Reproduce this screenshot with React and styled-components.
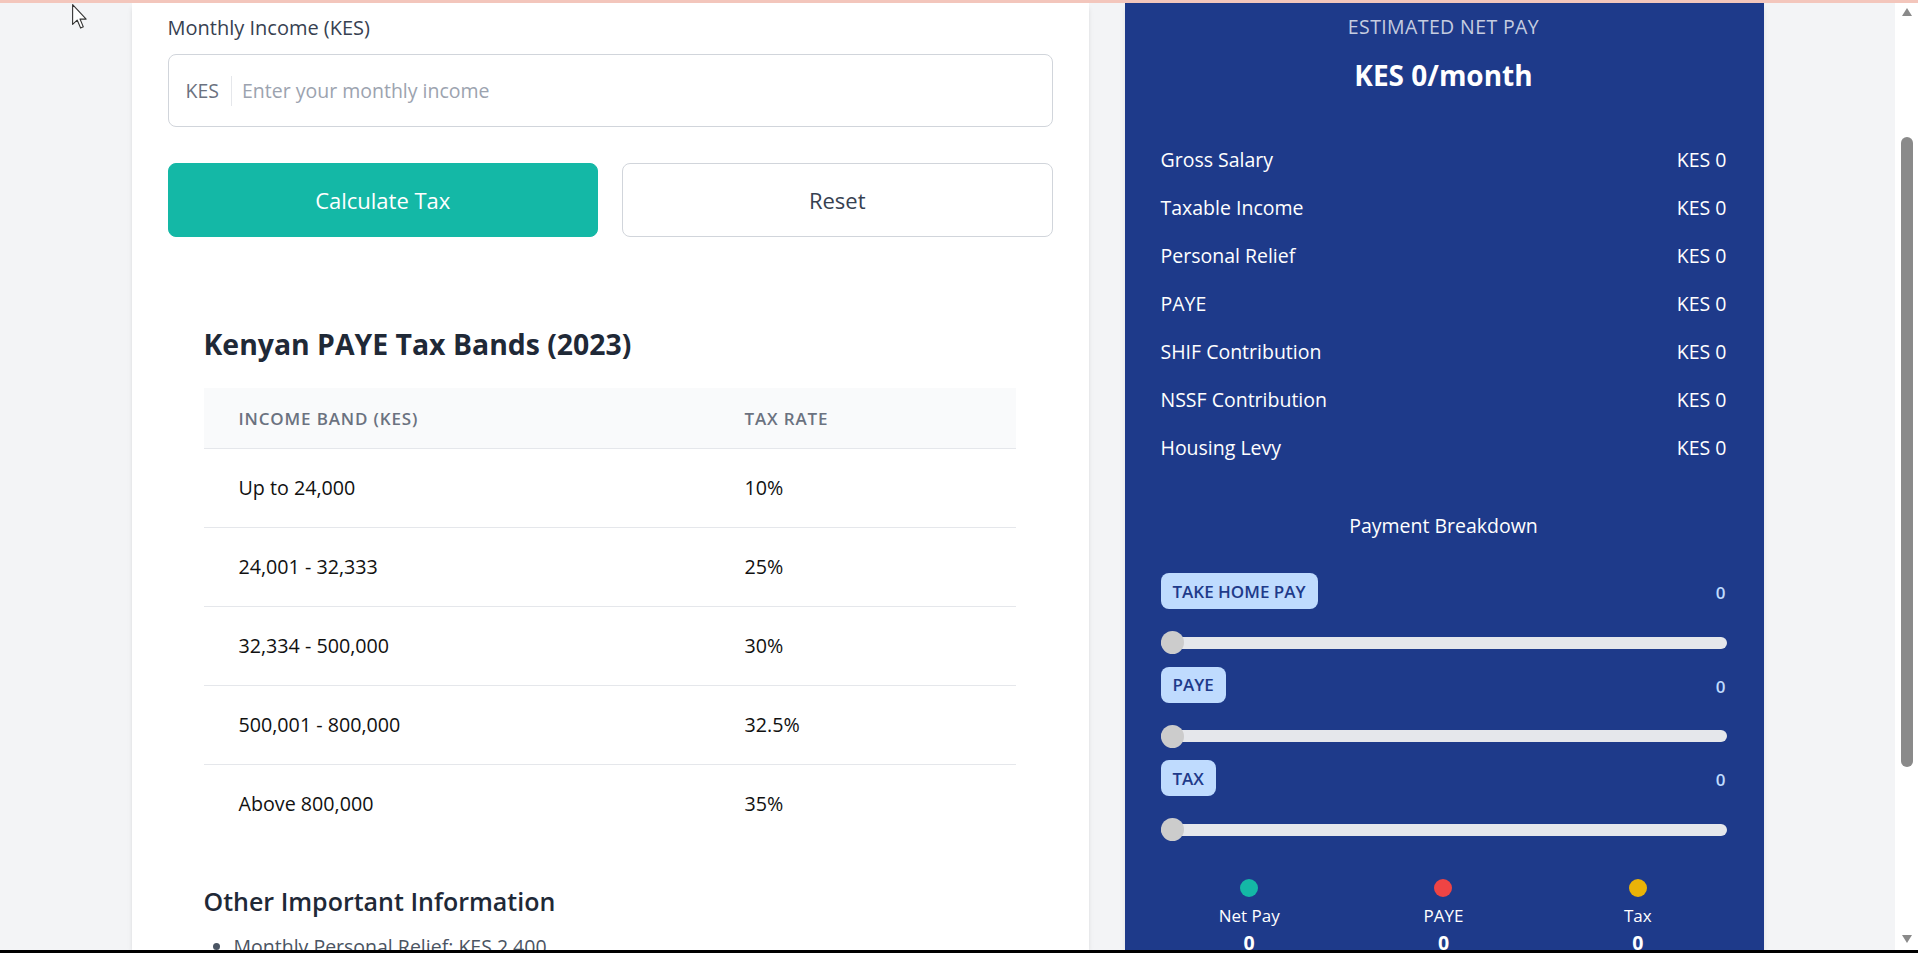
import React from "react";
import styled, { createGlobalStyle } from "styled-components";

const GlobalStyle = createGlobalStyle`
  * { box-sizing: border-box; }
  html, body { margin: 0; padding: 0; overflow: hidden; background: #f3f4f6; }
  body { font-family: "Open Sans", "Noto Sans", sans-serif; color: #1f2937; }
`;

const Screen = styled.div`
  position: relative;
  height: 953px;
  display: flex;
  flex-direction: column;
`;

const TopEdge = styled.div`
  flex: none;
  height: 3px;
  background: #f3c6bc;
`;

const BottomEdge = styled.div`
  flex: none;
  height: 3px;
  background: #000;
`;

const Viewport = styled.div`
  flex: 1;
  min-height: 0;
  display: flex;
`;

const Page = styled.main`
  flex: 1;
  min-width: 0;
  background: #f3f4f6;
  display: flex;
  justify-content: center;
  overflow: hidden;
`;

const Layout = styled.div`
  display: flex;
  gap: 36px;
  width: 1632px;
  align-items: stretch;
`;

/* ---------- left card ---------- */

const Card = styled.section`
  flex: none;
  width: 957px;
  background: #fff;
  box-shadow: 0 4px 6px -1px rgba(0, 0, 0, 0.1), 0 2px 4px -2px rgba(0, 0, 0, 0.1);
  padding: 9px 36px 0;
`;

const Label = styled.label`
  display: block;
  font-size: 20px;
  line-height: 30px;
  color: #374151;
  margin-bottom: 11px;
  margin-top: 1px;
`;

const InputBox = styled.div`
  display: flex;
  align-items: center;
  height: 73px;
  border: 1px solid #d1d5db;
  border-radius: 8px;
  padding: 0 17px;
`;

const Prefix = styled.span`
  font-size: 19.5px;
  line-height: 30px;
  color: #6b7280;
  padding-right: 12px;
  border-right: 1px solid #e5e7eb;
`;

const Input = styled.input`
  flex: 1;
  border: none;
  outline: none;
  padding: 0 0 0 10px;
  font-family: inherit;
  font-size: 19.5px;
  color: #111827;
  background: transparent;
  &::placeholder { color: #9ca3af; }
`;

const ButtonRow = styled.div`
  display: grid;
  grid-template-columns: 1fr 1fr;
  gap: 24px;
  margin-top: 36px;
`;

const Button = styled.button`
  height: 74px;
  border-radius: 8px;
  font-family: inherit;
  font-size: 22px;
  cursor: pointer;
  border: 1px solid ${(p) => (p.$primary ? "#14b8a6" : "#d1d5db")};
  background: ${(p) => (p.$primary ? "#14b8a6" : "#fff")};
  color: ${(p) => (p.$primary ? "#fff" : "#374151")};
`;

const Section = styled.div`
  margin-top: 49px;
  padding: 38px 37px 0 36px;
`;

const Heading = styled.h2`
  margin: 0 0 24px;
  font-size: 28.4px;
  line-height: 40px;
  font-weight: 700;
  color: #1f2937;
`;

const Table = styled.table`
  width: 100%;
  border-collapse: collapse;
`;

const Th = styled.th`
  background: #f9fafb;
  text-align: left;
  padding: 17.5px 35px;
  line-height: 25px;
  font-size: 17px;
  font-weight: 600;
  letter-spacing: 0.05em;
  text-transform: uppercase;
  color: #6b7280;
  border-bottom: 1px solid #e5e7eb;
  width: ${(p) => p.$w || "auto"};
`;

const Tr = styled.tr`
  border-bottom: 1px solid #e5e7eb;
  &:last-child { border-bottom: none; }
`;

const Td = styled.td`
  padding: 24px 35px;
  line-height: 30px;
  font-size: 19.7px;
  color: #111;
`;

const SubHeading = styled.h3`
  margin: 40.5px 0 0;
  font-size: 25px;
  line-height: 35px;
  font-weight: 600;
  color: #1f2937;
`;

const InfoList = styled.ul`
  margin: 13.5px 0 0;
  padding-left: 30px;
  color: #4b5563;
  font-size: 19.5px;
  line-height: 30px;
`;

/* ---------- right panel ---------- */

const Panel = styled.aside`
  flex: none;
  width: 639px;
  background: #1e3a8a;
  color: #fff;
  padding: 9px 37px 0 36px;
  box-shadow: 0 4px 6px -1px rgba(0, 0, 0, 0.1);
`;

const Eyebrow = styled.div`
  text-align: center;
  text-transform: uppercase;
  font-size: 19.5px;
  line-height: 30px;
  letter-spacing: 0.02em;
  color: rgba(255, 255, 255, 0.75);
`;

const NetPay = styled.div`
  margin-top: 13px;
  text-align: center;
  font-size: 28px;
  line-height: 40px;
  font-weight: 700;
`;

const Summary = styled.div`
  margin-top: 41px;
`;

const SummaryRow = styled.div`
  display: flex;
  justify-content: space-between;
  padding: 9px 0;
  font-size: 19.5px;
  line-height: 30px;
`;

const BreakdownTitle = styled.div`
  margin-top: 39px;
  text-align: center;
  font-size: 19.5px;
  line-height: 30px;
`;

const Bars = styled.div`
  margin-top: 32px;
`;

const BarGroup = styled.div`
  & + & { margin-top: 12.5px; }
`;

const BarHead = styled.div`
  display: flex;
  justify-content: space-between;
  align-items: center;
`;

const Badge = styled.span`
  display: inline-block;
  background: #bfdbfe;
  color: #1e3a8a;
  border-radius: 8px;
  padding: 5.5px 12px;
  font-size: 17px;
  line-height: 25px;
  font-weight: 600;
  text-transform: uppercase;
`;

const BarValue = styled.span`
  font-size: 17px;
  font-weight: 600;
  color: #bfdbfe;
  padding-right: 1px;
  margin-top: 3px;
`;

const Slider = styled.input.attrs({ type: "range", min: 0, max: 100 })`
  -webkit-appearance: none;
  appearance: none;
  display: block;
  width: 100%;
  height: 23px;
  margin: 22px 0 0;
  background: transparent;
  &::-webkit-slider-runnable-track {
    height: 12px;
    border-radius: 6px;
    background: #e5e7eb;
  }
  &::-webkit-slider-thumb {
    -webkit-appearance: none;
    width: 23px;
    height: 23px;
    border-radius: 50%;
    background: #cccccc;
    border: none;
    margin-top: -5.5px;
  }
`;

const Legend = styled.div`
  display: grid;
  grid-template-columns: repeat(3, 1fr);
  gap: 17px;
  margin-top: 37.5px;
  text-align: center;
`;

const LegendItem = styled.div`
  display: flex;
  flex-direction: column;
  align-items: center;
`;

const Dot = styled.span`
  width: 18px;
  height: 18px;
  border-radius: 50%;
  background: ${(p) => p.$color};
  margin-bottom: 6px;
`;

const LegendLabel = styled.span`
  font-size: 17px;
  line-height: 25px;
`;

const LegendValue = styled.span`
  font-size: 19.5px;
  line-height: 30px;
  font-weight: 700;
`;

/* ---------- window chrome ---------- */

const ScrollBar = styled.div`
  flex: none;
  width: 23px;
  background: #fff;
  display: flex;
  flex-direction: column;
  align-items: center;
  padding: 5px 0 7px;
`;

const Arrow = styled.span`
  width: 0;
  height: 0;
  border-left: 5px solid transparent;
  border-right: 5px solid transparent;
  ${(p) =>
    p.$down
      ? "border-top: 8px solid #8a8a8a; margin-top: auto;"
      : "border-bottom: 8px solid #8a8a8a;"}
`;

const Thumb = styled.span`
  margin-top: 121px;
  width: 12px;
  height: 630px;
  border-radius: 6px;
  background: #8a8a8a;
`;

const Cursor = styled.svg`
  position: absolute;
  left: 72px;
  top: 4px;
`;

const summary = [
  "Gross Salary",
  "Taxable Income",
  "Personal Relief",
  "PAYE",
  "SHIF Contribution",
  "NSSF Contribution",
  "Housing Levy",
];

const bands = [
  ["Up to 24,000", "10%"],
  ["24,001 - 32,333", "25%"],
  ["32,334 - 500,000", "30%"],
  ["500,001 - 800,000", "32.5%"],
  ["Above 800,000", "35%"],
];

const bars = ["Take Home Pay", "PAYE", "Tax"];

const legend = [
  ["Net Pay", "#14b8a6"],
  ["PAYE", "#ef4444"],
  ["Tax", "#eab308"],
];

export default function App() {
  return (
    <Screen>
      <GlobalStyle />
      <TopEdge />
      <Viewport>
        <Page>
          <Layout>
            <Card>
              <Label htmlFor="income">Monthly Income (KES)</Label>
              <InputBox>
                <Prefix>KES</Prefix>
                <Input id="income" placeholder="Enter your monthly income" />
              </InputBox>
              <ButtonRow>
                <Button $primary>Calculate Tax</Button>
                <Button>Reset</Button>
              </ButtonRow>

              <Section>
                <Heading>Kenyan PAYE Tax Bands (2023)</Heading>
                <Table>
                  <thead>
                    <tr>
                      <Th $w="506px">Income Band (KES)</Th>
                      <Th>Tax Rate</Th>
                    </tr>
                  </thead>
                  <tbody>
                    {bands.map(([band, rate]) => (
                      <Tr key={band}>
                        <Td>{band}</Td>
                        <Td>{rate}</Td>
                      </Tr>
                    ))}
                  </tbody>
                </Table>
                <SubHeading>Other Important Information</SubHeading>
                <InfoList>
                  <li>Monthly Personal Relief: KES 2,400</li>
                  <li>SHIF: 2.75% of gross salary</li>
                </InfoList>
              </Section>
            </Card>

            <Panel>
              <Eyebrow>Estimated Net Pay</Eyebrow>
              <NetPay>KES 0/month</NetPay>
              <Summary>
                {summary.map((item) => (
                  <SummaryRow key={item}>
                    <span>{item}</span>
                    <span>KES 0</span>
                  </SummaryRow>
                ))}
              </Summary>
              <BreakdownTitle>Payment Breakdown</BreakdownTitle>
              <Bars>
                {bars.map((b) => (
                  <BarGroup key={b}>
                    <BarHead>
                      <Badge>{b}</Badge>
                      <BarValue>0</BarValue>
                    </BarHead>
                    <Slider defaultValue={0} />
                  </BarGroup>
                ))}
              </Bars>
              <Legend>
                {legend.map(([name, color]) => (
                  <LegendItem key={name}>
                    <Dot $color={color} />
                    <LegendLabel>{name}</LegendLabel>
                    <LegendValue>0</LegendValue>
                  </LegendItem>
                ))}
              </Legend>
            </Panel>
          </Layout>
        </Page>
        <ScrollBar>
          <Arrow />
          <Thumb />
          <Arrow $down />
        </ScrollBar>
      </Viewport>
      <BottomEdge />
      <Cursor width="16" height="26" viewBox="0 0 13 21">
        <path
          d="M0.5 0.5 L0.5 16.5 L4.2 13 L7 19.5 L9.2 18.5 L6.5 12.2 L11.5 12.2 Z"
          fill="#fff"
          stroke="#333"
          strokeWidth="0.9"
          strokeLinejoin="round"
        />
      </Cursor>
    </Screen>
  );
}
